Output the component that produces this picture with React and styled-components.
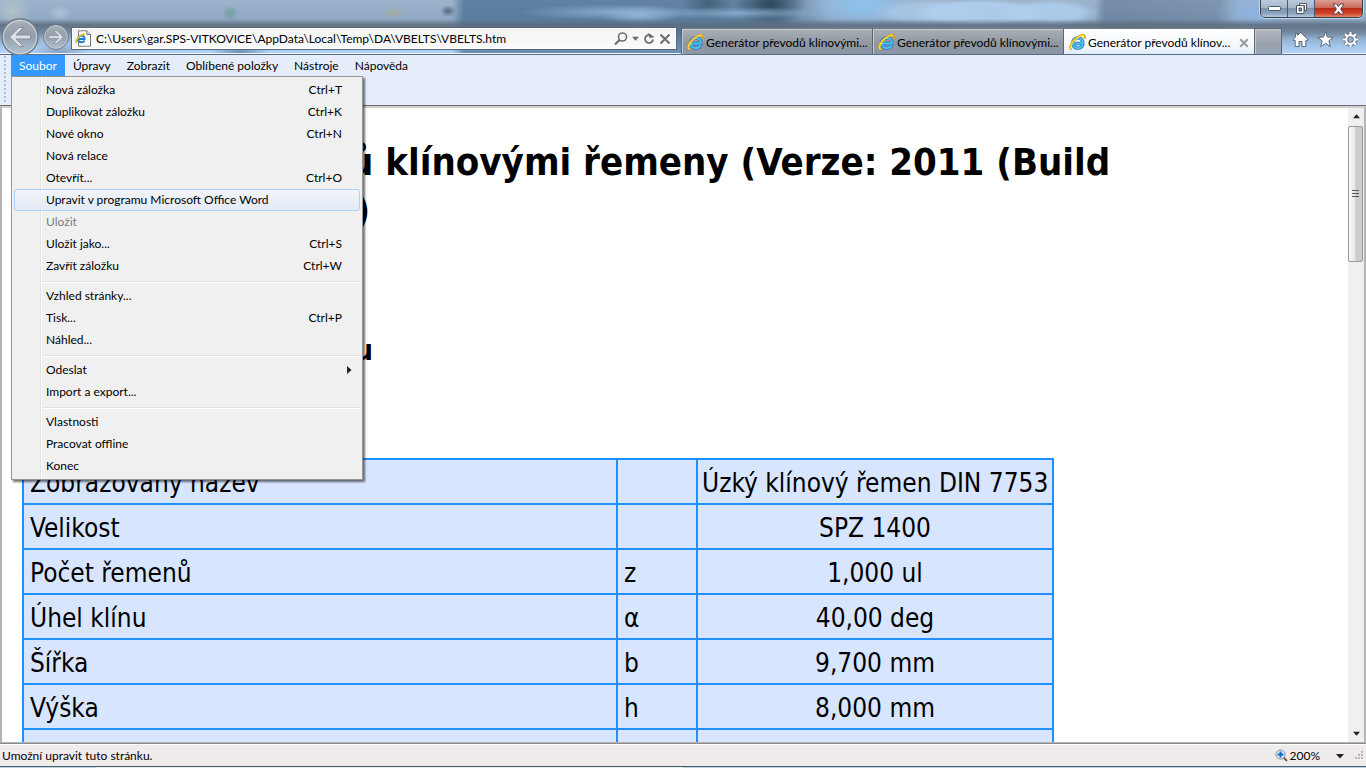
import React from "react";
import styled, { createGlobalStyle, css } from "styled-components";

const UI = `Lato, "Open Sans", sans-serif`;
const DOC = `"DejaVu Sans Condensed", Tahoma, sans-serif`;

const GlobalStyle = createGlobalStyle`
  * { box-sizing: border-box; }
  html, body { margin: 0; padding: 0; }
  body { overflow: hidden; font: 12px/16px ${UI}; color: #000; background: #fff; }
  button, input { font: inherit; color: inherit; margin: 0; padding: 0; border: 0; background: none; border-radius: 0; outline: none; }
  svg { display: block; flex: none; }
`;

const Window = styled.div`
  display: flex;
  flex-direction: column;
  height: 100vh;
`;

/* ---------- Glass frame ---------- */
const Frame = styled.header`
  flex: none;
  border-bottom: 1px solid #5a6b85;
  box-shadow: inset 0 -1px 0 #eef5fd;
  background:
    linear-gradient(180deg, transparent 19px, rgba(92, 108, 126, .85) 25px, rgba(92, 108, 126, .7) 28px, transparent 38px),
    radial-gradient(ellipse 70px 14px at 980px 13px, rgba(176, 208, 240, .85) 70%, transparent 100%),
    radial-gradient(ellipse 60px 14px at 930px 13px, rgba(176, 208, 240, .6) 60%, transparent 100%),
    radial-gradient(ellipse 50px 14px at 1050px 13px, rgba(176, 208, 240, .8) 60%, transparent 100%),
    radial-gradient(ellipse 90px 8px at 610px 12px, rgba(150, 186, 220, .7), transparent 100%),
    radial-gradient(ellipse 40px 10px at 640px 15px, rgba(164, 200, 232, .7), transparent 100%),
    radial-gradient(ellipse 100px 6px at 740px 13px, rgba(150, 186, 220, .7), transparent 100%),
    radial-gradient(ellipse 36px 24px at 770px 4px, rgba(36, 62, 78, .85), transparent 100%),
    radial-gradient(ellipse 26px 18px at 708px 3px, rgba(48, 76, 98, .6), transparent 100%),
    radial-gradient(ellipse 56px 22px at 862px 6px, rgba(140, 196, 242, .95), transparent 100%),
    radial-gradient(ellipse 40px 24px at 1255px 12px, rgba(140, 180, 225, .9), transparent 100%),
    radial-gradient(ellipse 8px 6px at 448px 11px, rgba(70, 84, 104, .8), transparent 100%),
    radial-gradient(ellipse 12px 6px at 394px 13px, rgba(176, 170, 130, .6), transparent 100%),
    radial-gradient(ellipse 8px 8px at 230px 13px, rgba(90, 150, 130, .6), transparent 100%),
    radial-gradient(ellipse 12px 8px at 60px 13px, rgba(190, 212, 230, .6), transparent 100%),
    radial-gradient(ellipse 30px 8px at 60px 52px, rgba(70, 90, 120, .4), transparent 100%),
    radial-gradient(ellipse 30px 6px at 240px 52px, rgba(80, 110, 150, .7), transparent 100%),
    radial-gradient(ellipse 20px 20px at 12px 12px, rgba(196, 208, 200, .6), transparent 100%),
    linear-gradient(90deg, transparent 452px, rgba(52, 96, 134, .6) 464px, rgba(44, 84, 122, .5) 780px, transparent 830px, transparent 1095px, rgba(60, 84, 112, .4) 1105px, rgba(60, 84, 112, .3) 1220px, transparent 1240px),
    linear-gradient(180deg, #9cb3cc 0, #8fa8c3 20px, #8099b5 32px, #a3c6ec 46px, #b4d4f6 53px);
`;

const CaptionRow = styled.div`
  display: flex;
  justify-content: flex-end;
  height: 27px;
  padding-right: 3px;
`;

const CaptionButtons = styled.div`
  display: flex;
  height: 18px;
  border: 1px solid #33404f;
  border-top: 0;
  border-radius: 0 0 5px 5px;
  overflow: hidden;
  box-shadow: 0 0 0 1px rgba(230, 240, 250, .6);
`;

const CaptionButton = styled.button`
  display: flex;
  align-items: center;
  justify-content: center;
  width: ${(p) => (p.$close ? 47 : 27)}px;
  border-right: ${(p) => (p.$close ? 0 : 1)}px solid #4a5868;
  background: ${(p) =>
    p.$close
      ? "linear-gradient(#dca094 0, #cb6a58 45%, #b92a14 50%, #d0452c 80%, #e88a6c 100%)"
      : "linear-gradient(#bccbdc 0, #a4b6cb 45%, #7e93ac 50%, #8fa5bf 80%, #b4cbe4 100%)"};
`;

const NavRow = styled.div`
  display: flex;
  align-items: flex-end;
  height: 27px;
`;

const HistoryButtons = styled.div`
  display: flex;
  align-items: center;
  flex: none;
  width: 71px;
  height: 34px;
  padding-left: 1px;
  gap: 4px;
`;

const RoundButton = styled.button`
  display: flex;
  flex: none;
`;

const AddressBar = styled.form`
  display: flex;
  align-items: center;
  align-self: flex-start;
  flex: 1;
  min-width: 0;
  height: 23px;
  margin-right: 4px;
  padding: 0 5px 0 3px;
  gap: 4px;
  border: 1px solid #5c6670;
  background: linear-gradient(#f4f4f4, #fafbfc);
  box-shadow: inset 0 0 0 1px #fff;
`;

const AddressInput = styled.input`
  flex: 1;
  min-width: 0;
  height: 20px;
`;

const IconButton = styled.button`
  display: flex;
  flex: none;
`;

const Tab = styled.button`
  display: flex;
  align-items: center;
  flex: none;
  width: 191px;
  height: 26px;
  padding: 2px 1px 0 5px;
  gap: 2px;
  text-align: left;
  border-left: 1px solid #5d6570;
  border-top: 1px solid #737b84;
  background: linear-gradient(#a9afb6, #90979f 60%, #8a97a8);
  box-shadow: inset 1px 1px 0 #c6cbd1;
  ${(p) => p.$active && css`
    background: linear-gradient(#ffffff, #f3f8fd 70%, #dfecfa);
    box-shadow: none;
    padding-right: 5px;
  `}
`;

const TabTitle = styled.span`
  flex: 1;
  min-width: 0;
  white-space: nowrap;
`;

const NewTab = styled.button`
  flex: none;
  width: 28px;
  height: 26px;
  border: 1px solid #5d6570;
  border-bottom: 0;
  background: linear-gradient(#b3b9c0, #98a0aa 60%, #97a6ba);
  box-shadow: inset 1px 1px 0 #c6cbd1;
`;

const Tools = styled.div`
  display: flex;
  flex: none;
  align-items: center;
  gap: 8px;
  height: 27px;
  padding: 0 7px 3px 10px;
`;

/* ---------- Menu bar ---------- */
const CommandArea = styled.div`
  display: flex;
  flex: none;
  height: 51px;
  border-bottom: 1px solid #6c6c6c;
  background: #e6edfa;
`;

const Grip = styled.div`
  width: 2px;
  margin: 1px 5px 1px 4px;
  background: repeating-linear-gradient(#b6bcc6 0 2px, transparent 2px 4px);
`;

const MenuBar = styled.nav`
  position: relative;
  display: flex;
  height: 21px;
`;

const MenuTitle = styled.button`
  height: 21px;
  padding: 0 8px;
  white-space: nowrap;
  ${(p) => p.$open && css`
    color: #fff;
    background: #3399ff;
  `}
`;

const Dropdown = styled.div`
  position: absolute;
  z-index: 2;
  top: 21px;
  left: 0;
  width: 352px;
  padding: 2px;
  border: 1px solid #979797;
  background: linear-gradient(90deg, #f0f0f0 28px, #e2e3e3 28px, #e2e3e3 29px, #fff 29px, #fff 30px, #f0f0f0 30px);
  box-shadow: 2px 2px 2px rgba(0, 0, 0, .55);
`;

const MenuItem = styled.button`
  display: flex;
  align-items: center;
  justify-content: space-between;
  width: 100%;
  height: 22px;
  padding: 0 17px 0 31px;
  border: 1px solid transparent;
  border-radius: 3px;
  color: ${(p) => (p.disabled ? "#7d7d7d" : "#000")};
  ${(p) => p.$submenu && css`
    padding-right: 6px;
  `}
  ${(p) => p.$hot && css`
    border-color: #aecff7;
    background: linear-gradient(rgba(242, 245, 250, .9), rgba(226, 234, 246, .9));
  `}
`;

const Separator = styled.hr`
  height: 2px;
  margin: 4px 0 2px 28px;
  border: 0;
  border-top: 1px solid #e0e0e0;
  border-bottom: 1px solid #fff;
`;

/* ---------- Document ---------- */
const Viewport = styled.div`
  display: flex;
  flex: 1;
  min-height: 0;
  border: 2px solid #b4b4b4;
  border-top-color: #d0d0d0;
  border-bottom-width: 1px;
  background: #fff;
`;

const Document = styled.main`
  flex: 1;
  min-width: 0;
  overflow: hidden;
  padding: 0 20px;
  font-family: ${DOC};
`;

const Title = styled.h1`
  margin: 30px 0 0;
  overflow: hidden;
  font-size: 38px;
  line-height: 48px;
  text-indent: -15px;
`;

const Subtitle = styled.h2`
  margin: 100px 0 90px;
  font-size: 28px;
  line-height: 34px;
`;

const DataTable = styled.table`
  width: 1032px;
  border-collapse: collapse;
  table-layout: fixed;
  font-size: 26px;
  line-height: 32px;
  background: #d8e5ff;
`;

const Cell = styled.td`
  height: 45px;
  padding: ${(p) => (p.$center ? "6px 4px 3px" : "6px 6px 3px")};
  border: 2px solid #1e90ff;
  text-align: ${(p) => (p.$center ? "center" : "left")};
  white-space: nowrap;
`;

const NameCol = styled.col`width: 594px;`;
const SymbolCol = styled.col`width: 80px;`;

const Scrollbar = styled.div`
  display: flex;
  flex-direction: column;
  flex: none;
  width: 16px;
  background: #f0f0f0;
`;

const ScrollButton = styled.button`
  display: flex;
  align-items: center;
  justify-content: center;
  height: 17px;
`;

const ScrollTrack = styled.div`
  flex: 1;
`;

const Thumb = styled.div`
  display: flex;
  align-items: center;
  justify-content: center;
  height: 136px;
  margin: 1px 1px 0 0;
  border: 1px solid #979797;
  border-radius: 2px;
  background: linear-gradient(90deg, #fbfbfb, #e6e6e8 45%, #c9c9cd 55%, #cfcfd3);
`;

/* ---------- Status bar ---------- */
const StatusBar = styled.footer`
  display: flex;
  align-items: center;
  flex: none;
  height: 23px;
  padding: 1px 2px 0;
  border-top: 1px solid #8a8a8a;
  background: #f0eceb;
  box-shadow: inset 0 1px 0 #fff;
`;

const StatusText = styled.span`
  flex: 1;
`;

const ZoomButton = styled.button`
  display: flex;
  align-items: center;
  gap: 2px;
  margin-right: 11px;
`;

const ZoomValue = styled.span`
  margin-right: 14px;
`;

const TaskbarEdge = styled.div`
  flex: none;
  height: 2px;
  border-top: 1px solid #4a5d6c;
  background: linear-gradient(90deg, #b5d3e0 7%, #e4efe9 7%, #e4efe9 50%, #b5d3e0 50%);
`;

/* ---------- Icons ---------- */
const IeLogo = () => (
  <svg width="17" height="17" viewBox="0 0 17 17" fill="none">
    <path d="M3.6 9.5h10.2c.2-3.4-1.9-5.6-4.9-5.6-3 0-5.2 2.2-5.2 5.2 0 2.9 2.2 5 5.2 5 2.3 0 4-1 4.8-3" stroke="#1b78b8" strokeWidth="3.4" />
    <path d="M3.6 9.5h10.2c.2-3.4-1.9-5.6-4.9-5.6-3 0-5.2 2.2-5.2 5.2 0 2.9 2.2 5 5.2 5 2.3 0 4-1 4.8-3" stroke="#56bdee" strokeWidth="2" />
    <path d="M3 15.5C.2 15 .6 11.2 4.2 7 8 2.6 13.6-.2 15.4 1.500c.8.8.6 2-.1 3.300" stroke="#e0a010" strokeWidth="2" />
    <path d="M3 15.300C.6 14.800 1 11.200 4.500 7.200 8.200 2.900 13.400.3 15.200 1.700" stroke="#ffd838" strokeWidth="1.4" />
  </svg>
);

const PageLogo = () => (
  <svg width="17" height="17" viewBox="0 0 17 17" fill="none">
    <path d="M3.5.8h8.500l3.500 3.500v11.900h-12z" fill="#fff" stroke="#777" />
    <path d="M11.800.8v3.700h3.700" fill="#e4e4e4" stroke="#777" />
    <path d="M3 9h6.600c0-2.100-1.200-3.200-3.200-3.200S3 7 3 9s1.400 3.300 3.400 3.300c1.500 0 2.600-.6 3.100-1.800" stroke="#1f7fd0" strokeWidth="2" />
    <path d="M1.600 13.300C.2 12.600 1 10 3.200 7.600c2.400-2.500 5.800-4.300 7-3.300" stroke="#f3c01c" strokeWidth="1.600" />
  </svg>
);

const RoundArrow = ({ size, back }) => (
  <svg width={size} height={size} viewBox="0 0 38 38">
    <defs>
      <linearGradient id={back ? "rb" : "rf"} x1="0" y1="0" x2="0" y2="1">
        <stop offset="0" stopColor="#b4bcc4" />
        <stop offset=".5" stopColor="#959fa9" />
        <stop offset="1" stopColor="#b3c0ce" />
      </linearGradient>
    </defs>
    <circle cx="19" cy="19" r="18" fill={`url(#${back ? "rb" : "rf"})`} fillOpacity=".85" stroke="#6d7680" strokeWidth="1.4" />
    <circle cx="19" cy="19" r="16.6" fill="none" stroke="#c8cfd6" strokeWidth="1.2" />
    <path
      transform={back ? undefined : "translate(38 0) scale(-1 1)"}
      d="M8.5 19L18 9.500h4.600L15 17h14.500v4H15l7.600 7.500H18z"
      fill="#dde1e5" stroke="#87919b" strokeWidth="1"
    />
  </svg>
);

const Magnifier = () => (
  <svg width="14" height="14" viewBox="0 0 14 14" fill="none" stroke="#6d6d6d">
    <circle cx="8.5" cy="5" r="4" strokeWidth="1.6" />
    <path d="M5.5 8L1 12.500" strokeWidth="2.2" />
  </svg>
);

const Refresh = () => (
  <svg width="12" height="13" viewBox="0 0 12 13" fill="none">
    <path d="M7.500 3.200A4 4 0 1 0 10 7.500" stroke="#6d6d6d" strokeWidth="1.8" />
    <path d="M5.800.2v5.600h5z" fill="#6d6d6d" transform="rotate(-14 8 3)" />
  </svg>
);

const Cross = ({ size = 12, color = "#6d6d6d", weight = 2 }) => (
  <svg width={size} height={size} viewBox="0 0 12 12" fill="none" stroke={color} strokeWidth={weight}>
    <path d="M1.5 1.500l9 9M10.500 1.500l-9 9" />
  </svg>
);

const Triangle = ({ dir = "down", size = 7, color = "#222" }) => (
  <svg width={size} height={size} viewBox="0 0 8 8" fill={color}>
    <path d={{ down: "M0 2h8L4 6.500z", up: "M0 6h8L4 1.500z", right: "M2 0v8l4.500-4z" }[dir]} />
  </svg>
);

const HomeIcon = () => (
  <svg width="17" height="17" viewBox="0 0 17 17">
    <path d="M8.5 1.500l7 6.500v1.500h-1.700v6H10v-5H7v5H3.200v-6H1.500V8l2-1.800V2.500h2v2z" fill="#fff" stroke="#55606c" strokeWidth=".9" />
  </svg>
);

const StarIcon = () => (
  <svg width="17" height="17" viewBox="0 0 17 17">
    <path d="M8.5.8l2 5.300 5.800.2-4.500 3.600 1.500 5.700-4.800-3.200-4.800 3.200 1.500-5.700L.7 6.300l5.800-.2z" fill="#fff" stroke="#55606c" strokeWidth=".9" />
  </svg>
);

const GearIcon = () => (
  <svg width="17" height="17" viewBox="0 0 17 17" fill="none">
    {["#55606c", "#fff"].map((c, i) => (
      <g key={c} stroke={c}>
        <circle cx="8.5" cy="8.5" r="4.3" strokeWidth={i ? 2.2 : 3.8} />
        <path
          d="M8.5.9v2.900M8.500 13.200v2.900M.9 8.500h2.900M13.200 8.500h2.900M3.100 3.100l2 2M11.900 11.900l2 2M3.100 13.900l2-2M11.900 5.100l2-2"
          strokeWidth={i ? 2.2 : 3.6}
        />
      </g>
    ))}
  </svg>
);

const ZoomIcon = () => (
  <svg width="13" height="13" viewBox="0 0 13 13" fill="none">
    <path d="M8 8l4 4" stroke="#7a5a3c" strokeWidth="2" />
    <circle cx="5.5" cy="5.5" r="4.6" fill="#d9ecff" stroke="#7f93aa" />
    <path d="M5.5 2.600v5.800M2.600 5.500h5.800" stroke="#1467c8" strokeWidth="2" />
  </svg>
);

const ResizeGrip = () => (
  <svg width="9" height="9" viewBox="0 0 9 9" fill="#b8b8b8">
    <path d="M6 0h2v2H6zM3 3h2v2H3zM6 3h2v2H6zM0 6h2v2H0zM3 6h2v2H3zM6 6h2v2H6z" />
  </svg>
);

/* ---------- Data ---------- */
const MENUS = ["Soubor", "Úpravy", "Zobrazit", "Oblíbené položky", "Nástroje", "Nápověda"];

const FILE_MENU = [
  { label: "Nová záložka", keys: "Ctrl+T" },
  { label: "Duplikovat záložku", keys: "Ctrl+K" },
  { label: "Nové okno", keys: "Ctrl+N" },
  { label: "Nová relace" },
  { label: "Otevřít...", keys: "Ctrl+O" },
  { label: "Upravit v programu Microsoft Office Word", hot: true },
  { label: "Uložit", disabled: true },
  { label: "Uložit jako...", keys: "Ctrl+S" },
  { label: "Zavřít záložku", keys: "Ctrl+W" },
  null,
  { label: "Vzhled stránky..." },
  { label: "Tisk...", keys: "Ctrl+P" },
  { label: "Náhled..." },
  null,
  { label: "Odeslat", submenu: true },
  { label: "Import a export..." },
  null,
  { label: "Vlastnosti" },
  { label: "Pracovat offline" },
  { label: "Konec" },
];

const ROWS = [
  ["Zobrazovaný název", "", "Úzký klínový řemen DIN 7753"],
  ["Velikost", "", "SPZ 1400"],
  ["Počet řemenů", "z", "1,000 ul"],
  ["Úhel klínu", "α", "40,00 deg"],
  ["Šířka", "b", "9,700 mm"],
  ["Výška", "h", "8,000 mm"],
  ["", "", ""],
];

export default function App() {
  return (
    <>
      <GlobalStyle />
      <Window>
        <Frame>
          <CaptionRow>
            <CaptionButtons>
              <CaptionButton aria-label="Minimalizovat">
                <svg width="13" height="6" viewBox="0 0 13 6"><rect x=".5" y=".5" width="12" height="4" rx="1" fill="#fff" stroke="#4b5566" /></svg>
              </CaptionButton>
              <CaptionButton aria-label="Obnovit">
                <svg width="13" height="13" viewBox="0 0 13 13" fill="none">
                  <path d="M4.500 1.500h7v7h-2v-5h-5z" fill="#fff" stroke="#4b5566" />
                  <path d="M1.500 3.500h7.500v8H1.500z" fill="#fff" stroke="#4b5566" />
                  <path d="M4 6h2.500v3H4z" fill="#7f94ad" stroke="#4b5566" />
                </svg>
              </CaptionButton>
              <CaptionButton $close aria-label="Zavřít">
                <svg width="13" height="12" viewBox="0 0 13 12">
                  <path d="M1 1h3.500l2 2.600L8.500 1H12L8.600 6l3.400 5H8.500l-2-2.600-2 2.600H1l3.400-5z" fill="#fff" stroke="#5a4450" />
                </svg>
              </CaptionButton>
            </CaptionButtons>
          </CaptionRow>
          <NavRow>
            <HistoryButtons>
              <RoundButton aria-label="Zpět"><RoundArrow size={38} back /></RoundButton>
              <RoundButton aria-label="Vpřed"><RoundArrow size={26} /></RoundButton>
            </HistoryButtons>
            <AddressBar>
              <PageLogo />
              <AddressInput aria-label="Adresa" defaultValue={"C:\\Users\\gar.SPS-VITKOVICE\\AppData\\Local\\Temp\\DA\\VBELTS\\VBELTS.htm"} />
              <IconButton type="button" aria-label="Hledat"><Magnifier /></IconButton>
              <IconButton type="button" aria-label="Možnosti hledání"><Triangle color="#6d6d6d" /></IconButton>
              <IconButton type="button" aria-label="Aktualizovat"><Refresh /></IconButton>
              <IconButton type="button" aria-label="Zastavit"><Cross /></IconButton>
            </AddressBar>
            <Tab><IeLogo /><TabTitle>Generátor převodů klínovými...</TabTitle></Tab>
            <Tab><IeLogo /><TabTitle>Generátor převodů klínovými...</TabTitle></Tab>
            <Tab $active>
              <IeLogo /><TabTitle>Generátor převodů klínov...</TabTitle>
              <Cross size={10} color="#9a9a9a" weight={2.5} />
            </Tab>
            <NewTab aria-label="Nová záložka" />
            <Tools>
              <IconButton aria-label="Domů"><HomeIcon /></IconButton>
              <IconButton aria-label="Oblíbené"><StarIcon /></IconButton>
              <IconButton aria-label="Nástroje"><GearIcon /></IconButton>
            </Tools>
          </NavRow>
        </Frame>

        <CommandArea>
          <Grip />
          <MenuBar>
            {MENUS.map((m, i) => <MenuTitle key={m} $open={i === 0}>{m}</MenuTitle>)}
            <Dropdown>
              {FILE_MENU.map((item, i) =>
                item ? (
                  <MenuItem key={i} disabled={item.disabled} $hot={item.hot} $submenu={item.submenu}>
                    <span>{item.label}</span>
                    {item.keys && <span>{item.keys}</span>}
                    {item.submenu && <Triangle dir="right" size={8} />}
                  </MenuItem>
                ) : <Separator key={i} />
              )}
            </Dropdown>
          </MenuBar>
        </CommandArea>

        <Viewport>
          <Document>
            <Title>Generátor převodů klínovými řemeny (Verze: 2011 (Build 150239000, v239)</Title>
            <Subtitle>Vlastnosti prvku řemenu</Subtitle>
            <DataTable>
              <colgroup><NameCol /><SymbolCol /><col /></colgroup>
              <tbody>
                {ROWS.map(([name, symbol, value], i) => (
                  <tr key={i}>
                    <Cell>{name}</Cell>
                    <Cell>{symbol}</Cell>
                    <Cell $center>{value}</Cell>
                  </tr>
                ))}
              </tbody>
            </DataTable>
          </Document>
          <Scrollbar>
            <ScrollButton aria-label="Nahoru"><Triangle dir="up" /></ScrollButton>
            <ScrollTrack>
              <Thumb>
                <svg width="8" height="9" viewBox="0 0 8 9" fill="#555"><path d="M0 0h7v1H0zM0 3h7v1H0zM0 6h7v1H0z" /></svg>
              </Thumb>
            </ScrollTrack>
            <ScrollButton aria-label="Dolů"><Triangle /></ScrollButton>
          </Scrollbar>
        </Viewport>

        <StatusBar>
          <StatusText>Umožní upravit tuto stránku.</StatusText>
          <ZoomButton>
            <ZoomIcon />
            <ZoomValue>200%</ZoomValue>
            <Triangle size={8} />
          </ZoomButton>
          <ResizeGrip />
        </StatusBar>
        <TaskbarEdge />
      </Window>
    </>
  );
}
